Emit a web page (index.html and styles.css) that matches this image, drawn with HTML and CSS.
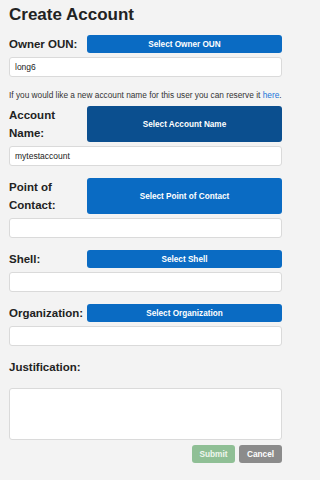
FILE: index.html
```html
<!DOCTYPE html>
<html>
<head>
<meta charset="utf-8">
<link rel="stylesheet" href="styles.css">
</head>
<body>
<h1 class="title">Create Account</h1>

<div class="group">
  <div class="row">
    <label class="label">Owner OUN:</label>
    <button class="select">Select Owner OUN</button>
  </div>
  <input class="field" type="text" value="long6">
</div>

<p class="help">If you would like a new account name for this user you can reserve it <a class="link" href="#">here</a>.</p>

<div class="group">
  <div class="row">
    <label class="label">Account Name:</label>
    <button class="select select-dark">Select Account Name</button>
  </div>
  <input class="field" type="text" value="mytestaccount">
</div>

<div class="group">
  <div class="row">
    <label class="label">Point of Contact:</label>
    <button class="select">Select Point of Contact</button>
  </div>
  <input class="field" type="text" value="">
</div>

<div class="group">
  <div class="row">
    <label class="label">Shell:</label>
    <button class="select">Select Shell</button>
  </div>
  <input class="field" type="text" value="">
</div>

<div class="group">
  <div class="row">
    <label class="label">Organization:</label>
    <button class="select">Select Organization</button>
  </div>
  <input class="field" type="text" value="">
</div>

<label class="label block">Justification:</label>
<textarea class="area"></textarea>

<div class="actions">
  <button class="btn submit">Submit</button>
  <button class="btn cancel">Cancel</button>
</div>
</body>
</html>
```

FILE: styles.css
```css
html, body {
  margin: 0;
  background: #f3f3f3;
}
body {
  max-width: 273px;
  padding: 4px 14px 0 9px;
  font-family: "Liberation Sans", Arial, Helvetica, sans-serif;
  color: #222;
}
.title {
  margin: 0 0 9px 0;
  font-size: 17px;
  line-height: 22px;
  font-weight: bold;
  color: #222;
}
.group {
  margin-bottom: 12.5px;
}
.row {
  display: flex;
  align-items: stretch;
}
.label {
  width: 78px;
  flex: none;
  font-size: 11.5px;
  line-height: 18px;
  font-weight: bold;
  color: #222;
}
.label.block {
  display: block;
  width: auto;
  margin-bottom: 12px;
}
.select {
  flex: 1;
  border: none;
  border-radius: 3px;
  background: #0a6bc3;
  color: #fff;
  font-family: inherit;
  font-size: 8.2px;
  font-weight: bold;
  padding: 0;
  margin: 0;
}
.select-dark {
  background: #0b4f8f;
}
.field {
  display: block;
  box-sizing: border-box;
  width: 100%;
  height: 19.5px;
  margin: 4px 0 0 0;
  padding: 0 5px;
  border: 1px solid #dadada;
  border-radius: 3px;
  background: #fff;
  font-family: inherit;
  font-size: 8.5px;
  color: #222;
  outline: none;
}
.help {
  margin: 0 0 5px 0;
  font-size: 8.3px;
  line-height: 12px;
  color: #333;
  white-space: nowrap;
}
.link {
  color: #1a73d9;
  text-decoration: none;
}
.area {
  display: block;
  box-sizing: border-box;
  width: 100%;
  height: 52px;
  margin: 0;
  border: 1px solid #dadada;
  border-radius: 3px;
  background: #fff;
  resize: none;
  outline: none;
}
.actions {
  display: flex;
  justify-content: flex-end;
  gap: 4px;
  margin-top: 5px;
}
.btn {
  width: 43px;
  height: 18px;
  border: none;
  border-radius: 3px;
  padding: 0;
  font-family: inherit;
  font-size: 8.3px;
  font-weight: bold;
  color: #fff;
}
.submit {
  background: #8fbf95;
  color: #eef6ee;
}
.cancel {
  background: #8b8b8b;
}
```
